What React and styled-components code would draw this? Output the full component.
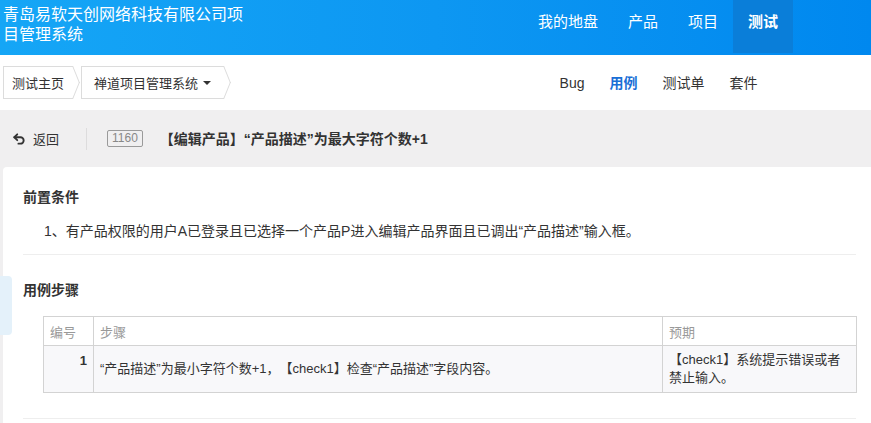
import React from 'react';
import styled, { createGlobalStyle } from 'styled-components';
import { Undo2 } from 'lucide-react';

const GlobalStyle = createGlobalStyle`
  * { box-sizing: border-box; }
  body {
    margin: 0;
    background: #f0eff0;
    color: #333;
    font-family: "Liberation Sans", "Noto Sans CJK SC", sans-serif;
    text-spacing-trim: space-all;
    font-feature-settings: "chws" 0, "halt" 0;
  }
`;

const Page = styled.div`
  width: 871px;
  min-height: 423px;
  overflow: hidden;
`;

const Header = styled.header`
  height: 55px;
  display: flex;
  justify-content: space-between;
  background: linear-gradient(90deg, #15a6f6 0%, #0d97f2 50%, #0088ef 100%);
  color: #fff;
`;

const Brand = styled.div`
  width: 250px;
  padding: 5px 0 0 3px;
  font-size: 16px;
  line-height: 20px;
`;

const Nav = styled.nav`
  display: flex;
  align-items: flex-start;
  padding-right: 78px;
`;

const NavItem = styled.a`
  height: 53px;
  padding: 12px 15px 0;
  font-size: 15px;
  line-height: 20px;
  color: #fff;
  font-weight: ${p => (p.$active ? 700 : 400)};
  background: ${p => (p.$active ? '#0a7ed9' : 'transparent')};
`;

const SubBar = styled.div`
  height: 55px;
  display: flex;
  align-items: center;
  padding-left: 3px;
  background: #fff;
`;

const Crumbs = styled.div`
  display: flex;
  align-items: center;
`;

const Crumb = styled.div`
  position: relative;
  height: 33px;
  display: flex;
  align-items: center;
  gap: 5px;
  padding: 0 ${p => p.$padRight}px 0 ${p => p.$padLeft}px;
  margin-right: 8px;
  border: 1px solid #dcdcdc;
  border-right: none;
  font-size: 13px;
  color: #333;

  &::before,
  &::after {
    content: '';
    position: absolute;
    right: -7px;
    width: 8px;
    height: 17px;
    border-right: 1px solid #dcdcdc;
  }
  &::before {
    top: -1px;
    transform-origin: bottom;
    transform: skewX(22deg);
  }
  &::after {
    bottom: -1px;
    transform-origin: top;
    transform: skewX(-22deg);
  }
`;

const Caret = styled.span`
  width: 0;
  height: 0;
  border-left: 4px solid transparent;
  border-right: 4px solid transparent;
  border-top: 4px solid #333;
  margin-top: 1px;
`;

const SubMenu = styled.div`
  display: flex;
  margin-left: auto;
  padding-right: 101px;
`;

const SubItem = styled.a`
  padding: 0 12.5px;
  font-size: 14px;
  line-height: 20px;
  color: ${p => (p.$active ? '#1a6fd6' : '#333')};
  font-weight: ${p => (p.$active ? 700 : 400)};
`;

const Toolbar = styled.div`
  height: 57px;
  display: flex;
  align-items: center;
  padding-left: 12px;
`;

const BackLink = styled.a`
  display: flex;
  align-items: center;
  gap: 7px;
  font-size: 13px;
  color: #333;
`;

const VDivider = styled.span`
  width: 1px;
  height: 22px;
  margin-left: 27px;
  background: #dddcdd;
`;

const IdBadge = styled.span`
  margin-left: 20px;
  height: 17px;
  padding: 0 4px;
  border: 1px solid #9a9a9a;
  border-radius: 2px;
  font-size: 12px;
  line-height: 15px;
  color: #888;
`;

const CaseTitle = styled.h1`
  margin: 0 0 0 17px;
  font-size: 14px;
  font-weight: 700;
  color: #333;
  line-height: 20px;
`;

const Panel = styled.main`
  margin-left: 3px;
  min-height: 256px;
  padding: 0 15px 0 20px;
  background: #fff;
  border-radius: 4px 0 0 0;
`;

const Section = styled.section`
  padding: ${p => p.$top}px 0 ${p => p.$bottom}px;
  border-bottom: 1px solid #eeeeee;
`;

const SectionTitle = styled.h2`
  margin: 0;
  font-size: 14px;
  font-weight: 700;
  line-height: 20px;
  color: #333;
`;

const Precondition = styled.p`
  margin: 14px 0 0;
  padding-left: 21px;
  font-size: 14px;
  line-height: 20px;
  color: #333;
`;

const StepsTable = styled.table`
  margin: 16px 0 0 20px;
  width: 813px;
  border-collapse: collapse;
  font-size: 13px;
  table-layout: fixed;
`;

const Th = styled.th`
  height: 29px;
  padding: 0 6px;
  border: 1px solid #d3d3d3;
  text-align: left;
  font-weight: 400;
  color: #999;
  width: ${p => p.$w}px;
`;

const Td = styled.td`
  padding: ${p => (p.$num ? '6px 6px 0' : '5px 6px')};
  border: 1px solid #d3d3d3;
  background: #f8f8fa;
  line-height: 18px;
  color: #333;
  text-align: ${p => (p.$num ? 'right' : 'left')};
  vertical-align: ${p => (p.$num ? 'top' : 'middle')};
  font-weight: ${p => (p.$num ? 700 : 400)};
`;

const SideTab = styled.div`
  position: absolute;
  left: 0;
  top: 276px;
  width: 12px;
  height: 59px;
  background: #e4f1fa;
  border-radius: 0 4px 4px 0;
`;

export default function App() {
  return (
    <Page>
      <GlobalStyle />
      <Header>
        <Brand>青岛易软天创网络科技有限公司项目管理系统</Brand>
        <Nav>
          <NavItem>我的地盘</NavItem>
          <NavItem>产品</NavItem>
          <NavItem>项目</NavItem>
          <NavItem $active>测试</NavItem>
        </Nav>
      </Header>
      <SubBar>
        <Crumbs>
          <Crumb $padLeft={8} $padRight={9}>测试主页</Crumb>
          <Crumb $padLeft={12} $padRight={13}>
            禅道项目管理系统 <Caret />
          </Crumb>
        </Crumbs>
        <SubMenu>
          <SubItem>Bug</SubItem>
          <SubItem $active>用例</SubItem>
          <SubItem>测试单</SubItem>
          <SubItem>套件</SubItem>
        </SubMenu>
      </SubBar>
      <Toolbar>
        <BackLink>
          <Undo2 size={14} strokeWidth={3.2} color="#333" />
          返回
        </BackLink>
        <VDivider />
        <IdBadge>1160</IdBadge>
        <CaseTitle>【编辑产品】“产品描述”为最大字符个数+1</CaseTitle>
      </Toolbar>
      <Panel>
        <Section $top={20} $bottom={13}>
          <SectionTitle>前置条件</SectionTitle>
          <Precondition>
            1、有产品权限的用户A已登录且已选择一个产品P进入编辑产品界面且已调出“产品描述”输入框。
          </Precondition>
        </Section>
        <Section $top={25} $bottom={25}>
          <SectionTitle>用例步骤</SectionTitle>
          <StepsTable>
            <thead>
              <tr>
                <Th $w={50}>编号</Th>
                <Th $w={569}>步骤</Th>
                <Th $w={194}>预期</Th>
              </tr>
            </thead>
            <tbody>
              <tr>
                <Td $num>1</Td>
                <Td>“产品描述”为最小字符个数+1，【check1】检查“产品描述”字段内容。</Td>
                <Td>【check1】系统提示错误或者禁止输入。</Td>
              </tr>
            </tbody>
          </StepsTable>
        </Section>
      </Panel>
      <SideTab />
    </Page>
  );
}
